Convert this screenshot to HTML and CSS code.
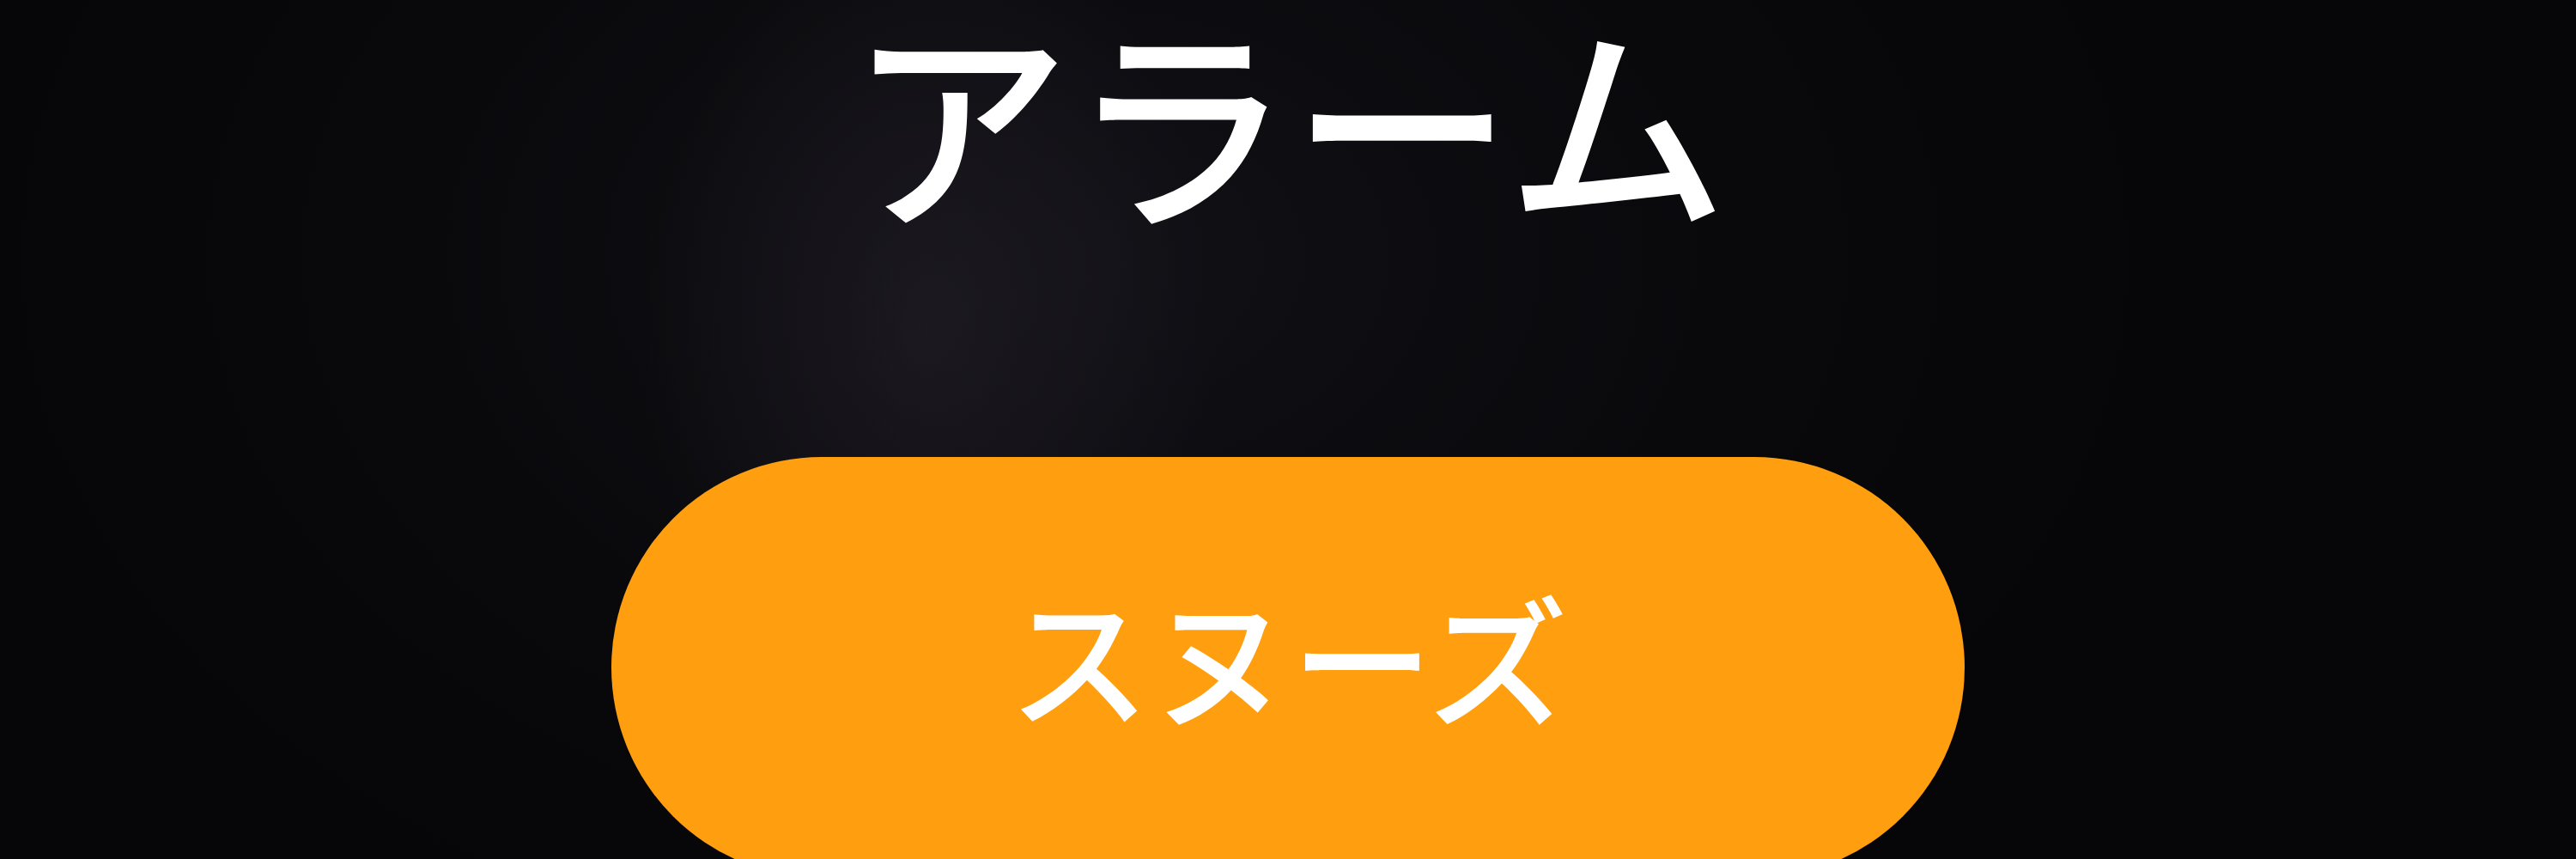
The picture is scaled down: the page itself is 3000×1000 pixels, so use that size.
FILE: index.html
```html
<!DOCTYPE html>
<html lang="ja">
<head>
<meta charset="utf-8">
<title>アラーム</title>
<link rel="stylesheet" href="styles.css">
</head>
<body>
<main class="screen">
  <h1 class="title">アラーム</h1>
  <button class="snooze">スヌーズ</button>
</main>
</body>
</html>
```
FILE: styles.css
```css
html, body {
  margin: 0;
  padding: 0;
  width: 3000px;
  height: 1000px;
  overflow: hidden;
}
body {
  background:
    radial-gradient(ellipse 480px 700px at 1080px 380px, rgba(40, 34, 44, 0.5), rgba(20, 18, 26, 0) 70%),
    radial-gradient(ellipse 1300px 900px at 1250px 300px, #111116 0%, #09090c 60%, #060608 100%);
  font-family: "Noto Sans CJK JP", "Noto Sans", sans-serif;
}
.screen {
  display: flex;
  flex-direction: column;
  align-items: center;
  height: 1000px;
  overflow: hidden;
}
.title {
  margin: 30px 0 0 0;
  font-family: "Liberation Sans", "Noto Sans CJK JP", sans-serif;
  font-size: 258px;
  line-height: 258px;
  font-weight: 500;
  color: #ffffff;
  white-space: nowrap;
}
.snooze {
  margin-top: 244px;
  flex: none;
  width: 1576px;
  height: 490px;
  border: none;
  border-radius: 245px / 245px;
  background: #ff9f0f;
  color: #ffffff;
  font-family: "Noto Sans CJK JP", "Noto Sans", sans-serif;
  font-size: 165px;
  font-weight: 500;
  line-height: 1;
  display: flex;
  justify-content: center;
  align-items: flex-start;
  padding: 148px 0 0 0;
  white-space: nowrap;
}
```
